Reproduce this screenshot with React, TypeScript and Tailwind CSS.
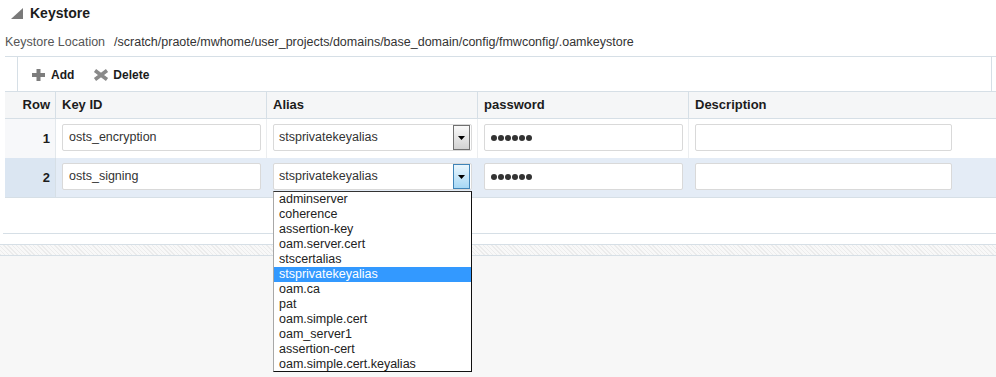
import React from "react";

const font = { fontFamily: '"Liberation Sans", Arial, sans-serif' };

const aliases = [
  "adminserver",
  "coherence",
  "assertion-key",
  "oam.server.cert",
  "stscertalias",
  "stsprivatekeyalias",
  "oam.ca",
  "pat",
  "oam.simple.cert",
  "oam_server1",
  "assertion-cert",
  "oam.simple.cert.keyalias",
];

const rows = [
  { n: 1, keyId: "osts_encryption", alias: "stsprivatekeyalias", active: false },
  { n: 2, keyId: "osts_signing", alias: "stsprivatekeyalias", active: true },
];

function Dots() {
  return (
    <div className="flex gap-[1px] pl-[6px]">
      {[0, 1, 2, 3, 4, 5].map((i) => (
        <span key={i} className="w-[6px] h-[6px] rounded-full bg-[#333]" />
      ))}
    </div>
  );
}

function SelectBox({ value, active }: { value: string; active: boolean }) {
  return (
    <div className="w-[199px] h-[27px] border border-[#d9d9d9] rounded-[2px] bg-white flex items-center justify-between pl-[5px] pr-[1px]">
      <span className="text-[12.5px] text-[#333]">{value}</span>
      <div
        className={
          active
            ? "w-[17px] h-[25px] border border-[#3f84b8] bg-gradient-to-b from-[#eaf6fd] to-[#a6d8f5] flex items-center justify-center"
            : "w-[17px] h-[25px] border border-[#707070] bg-gradient-to-b from-[#fafafa] to-[#d2d2d2] flex items-center justify-center"
        }
      >
        <svg width="7" height="4" viewBox="0 0 7 4">
          <polygon points="0,0 7,0 3.5,4" fill="#000" />
        </svg>
      </div>
    </div>
  );
}

function TextBox({ value, width }: { value: string; width: string }) {
  return (
    <div
      className={`${width} h-[27px] border border-[#d9d9d9] rounded-[2px] bg-white flex items-center pl-[6px] text-[12.5px] text-[#333]`}
    >
      {value}
    </div>
  );
}

export default function App() {
  return (
    <div className="w-[996px] h-[377px] bg-white relative overflow-hidden flex flex-col" style={font}>
      {/* section title */}
      <div className="h-[26px] flex items-center pl-[11px] gap-[7px]">
        <svg width="12" height="11" viewBox="0 0 12 11">
          <polygon points="12,0 12,11 0,11" fill="#7a7a7a" />
        </svg>
        <span className="text-[14px] font-bold text-[#1c1c1c]">Keystore</span>
      </div>

      <div className="h-[30px] pt-[2px] flex items-center pl-[5px] gap-[9px] text-[12.5px]">
        <span className="text-[#555]">Keystore Location</span>
        <span className="text-[#333]">
          /scratch/praote/mwhome/user_projects/domains/base_domain/config/fmwconfig/.oamkeystore
        </span>
      </div>

      {/* toolbar */}
      <div className="ml-[5px] border-t border-[#d6dfe6]">
        <div className="ml-[12px] mr-[4px] h-[34px] border-l border-r border-[#d6dfe6] flex items-center pl-[14px] gap-[19px] text-[12px] font-bold text-[#1c1c1c]">
          <div className="flex items-center gap-[6px] pt-[2px]">
            <svg width="13" height="12" viewBox="0 0 13 12">
              <rect x="0" y="4" width="13" height="4" fill="#7d7d7d" />
              <rect x="4.5" y="0" width="4" height="12" fill="#7d7d7d" />
            </svg>
            <span>Add</span>
          </div>
          <div className="flex items-center gap-[4px] pt-[2px]">
            <svg width="16" height="12" viewBox="0 0 16 12">
              <path d="M2 1.5 L14 10.5 M14 1.5 L2 10.5" stroke="#8a8a8a" strokeWidth="3.6" />
            </svg>
            <span>Delete</span>
          </div>
        </div>
      </div>

      {/* table */}
      <div className="ml-[5px] border-t border-b border-[#d6dfe6]">
        <div className="flex h-[27px] bg-[#f5f6f7] border-b border-[#d6dfe6] text-[13px] font-bold text-[#1c1c1c]">
          <div className="w-[51px] border-r border-[#d6dfe6] flex items-center justify-end pr-[5px]">Row</div>
          <div className="w-[211px] border-r border-[#d6dfe6] flex items-center pl-[6px]">Key ID</div>
          <div className="w-[211px] border-r border-[#d6dfe6] flex items-center pl-[6px]">Alias</div>
          <div className="w-[211px] border-r border-[#d6dfe6] flex items-center pl-[6px]">password</div>
          <div className="flex-1 flex items-center pl-[6px]">Description</div>
        </div>
        {rows.map((r) => (
          <div key={r.n} className={r.active ? "flex h-[39px] bg-[#e4ecf6]" : "flex h-[39px] bg-white"}>
            <div
              className={
                r.active
                  ? "w-[51px] border-r border-[#d6dfe6] bg-[#dbe6f2] flex items-center justify-end pr-[5px] text-[13px] font-bold text-[#1c1c1c]"
                  : "w-[51px] border-r border-[#e3e8ec] bg-[#f7f8fa] flex items-center justify-end pr-[5px] text-[13px] font-bold text-[#1c1c1c]"
              }
            >
              {r.n}
            </div>
            <div className={r.active ? "w-[211px] pl-[6px] pt-[5px]" : "w-[211px] border-r border-[#eceef0] pl-[6px] pt-[5px]"}>
              <TextBox value={r.keyId} width="w-[199px]" />
            </div>
            <div className={r.active ? "w-[211px] pl-[6px] pt-[5px]" : "w-[211px] border-r border-[#eceef0] pl-[6px] pt-[5px]"}>
              <SelectBox value={r.alias} active={r.active} />
            </div>
            <div className={r.active ? "w-[211px] pl-[6px] pt-[5px]" : "w-[211px] border-r border-[#eceef0] pl-[6px] pt-[5px]"}>
              <div className="w-[199px] h-[27px] border border-[#d9d9d9] rounded-[2px] bg-white flex items-center">
                <Dots />
              </div>
            </div>
            <div className="flex-1 pl-[6px] pt-[5px]">
              <TextBox value="" width="w-[257px]" />
            </div>
          </div>
        ))}
      </div>

      {/* footer area */}
      <div className="h-[35px]" />
      <div className="border-t border-[#d6dfe6] h-[11px] ml-[3px]" />
      <div className="h-[12px] border-t border-b border-[#d6dfe6] bg-[repeating-linear-gradient(45deg,#ececec_0px,#ececec_1px,#f8f8f8_1px,#f8f8f8_3px)]" />
      <div className="flex-1 bg-[#f7f7f7]" />

      {/* open dropdown list */}
      <div className="absolute left-[273px] top-[191px] w-[199px] h-[181px] bg-white border-t border-r border-b border-l border-t-[#333] border-r-[#111] border-b-[#111] border-l-[#a8a8a8] text-[12.5px] text-[#222]">
        {aliases.map((a, i) => (
          <div
            key={a}
            className={i === 5 ? "h-[15px] leading-[15px] pl-[5px] bg-[#3399ff] text-white" : "h-[15px] leading-[15px] pl-[5px]"}
          >
            {a}
          </div>
        ))}
      </div>
    </div>
  );
}
